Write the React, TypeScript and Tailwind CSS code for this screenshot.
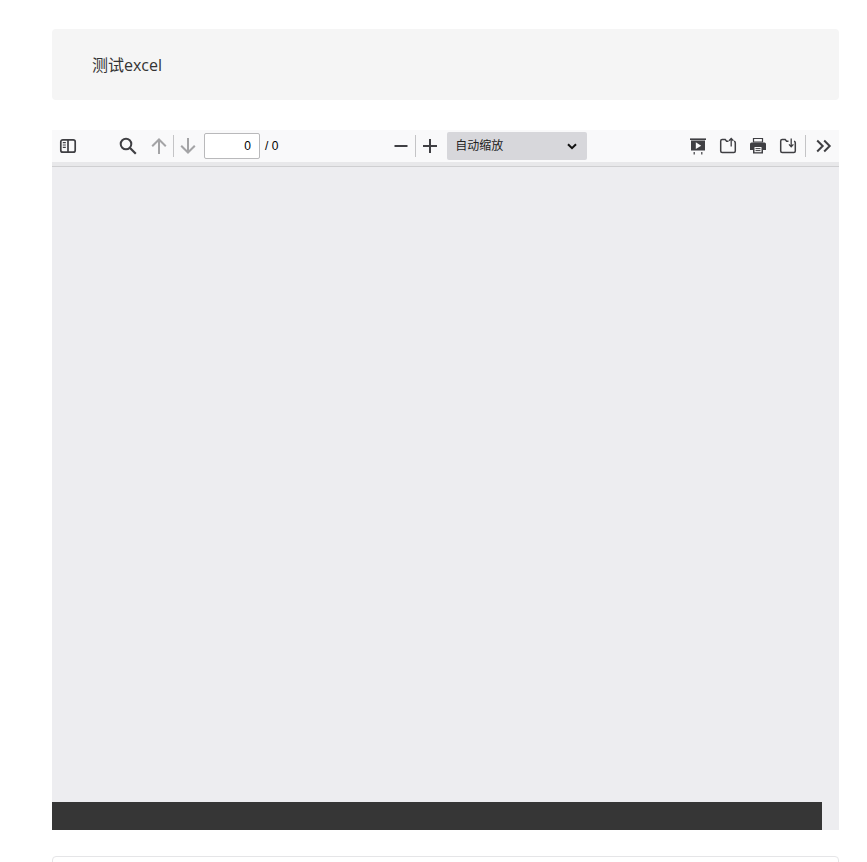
const sans = "font-['Liberation_Sans','Noto_Sans_CJK_SC',sans-serif]";

function Sep() {
  return <div className="w-px h-[22px] bg-[#c4c4c6]" />;
}

function Icon({ children, className }: { children: React.ReactNode; className?: string }) {
  return (
    <div className={`w-[18px] h-[18px] shrink-0 ${className ?? ""}`}>
      <svg width="18" height="18" viewBox="0 0 18 18" fill="none">
        {children}
      </svg>
    </div>
  );
}

const dark = "#3f3f43";
const grey = "#a4a4a6";

export default function App() {
  return (
    <div className={`min-h-[862px] h-[862px] overflow-hidden bg-white pl-[52px] pr-[28px] pt-[29px] ${sans}`}>
      <div className="h-[71px] rounded bg-[#f5f5f5] pl-[40px] flex items-center font-['Open_Sans','Noto_Sans_CJK_SC',sans-serif] text-[16px] text-[#333]">
        测试excel
      </div>

      <div className="mt-[30px] h-[700px] flex flex-col bg-[#ededf0]">
        {/* toolbar */}
        <div className="h-[32px] bg-[#f9f9fa] flex items-center pl-[7px] pr-[6px] text-[12px] text-black">
          <Icon>
            <rect x="1.8" y="2.8" width="14.4" height="12.4" rx="2" stroke={dark} strokeWidth="1.7" />
            <path d="M9 3v12" stroke={dark} strokeWidth="1.7" />
            <path d="M3.8 5.6h3M3.8 8h3M3.8 10.4h3" stroke={dark} strokeWidth="1.2" />
          </Icon>
          <Icon className="ml-[42px]">
            <circle cx="7" cy="7" r="5.3" stroke={dark} strokeWidth="2" />
            <path d="M11 11l5.8 5.8" stroke={dark} strokeWidth="2.2" />
          </Icon>
          <Icon className="ml-[13px]">
            <path d="M9 17V2.5M2.2 9.3L9 2.5 15.8 9.3" stroke={grey} strokeWidth="2" />
          </Icon>
          <div className="ml-[5px] mr-[5px]">
            <Sep />
          </div>
          <Icon>
            <path d="M9 1v14.5M2.2 8.7L9 15.5 15.8 8.7" stroke={grey} strokeWidth="2" />
          </Icon>
          <div className="ml-[7px] w-[56px] h-[26px] rounded-[2px] border border-[#b9b9bb] bg-white flex items-center justify-end pr-[8px]">
            0
          </div>
          <span className="ml-[5px]">/ 0</span>

          <Icon className="ml-[114px]">
            <path d="M2.5 9h13" stroke={dark} strokeWidth="2" />
          </Icon>
          <div className="ml-[5px] mr-[5px]">
            <Sep />
          </div>
          <Icon>
            <path d="M2 9h14M9 2v14" stroke={dark} strokeWidth="2" />
          </Icon>
          <div className="ml-[8px] w-[140px] h-[28px] rounded-[2px] bg-[#d7d7db] flex items-center justify-between pl-[8px] pr-[10px]">
            <span className="text-[#222]">自动缩放</span>
            <svg width="10" height="7" viewBox="0 0 10 7" fill="none">
              <path d="M1 1.2l4 4 4-4" stroke="#111" strokeWidth="2" />
            </svg>
          </div>

          {/* presentation */}
          <Icon className="ml-auto">
            <path d="M1 2.2h16" stroke={dark} strokeWidth="1.6" />
            <rect x="2" y="3.5" width="14" height="10" fill={dark} />
            <path d="M6.8 5.3l5.4 3.4-5.4 3.4z" fill="#f9f9fa" />
            <path d="M5.2 15v2.4M12.8 15v2.4" stroke={dark} strokeWidth="1.2" />
          </Icon>
          {/* open file */}
          <Icon className="ml-[12px]">
            <path d="M9.5 4.2H7.6L6.2 2.6H3.2A1.5 1.5 0 0 0 1.7 4.1v10a1.5 1.5 0 0 0 1.5 1.5h11.6a1.5 1.5 0 0 0 1.5-1.5V5.7a1.5 1.5 0 0 0-1.3-1.5" stroke={dark} strokeWidth="1.5" />
            <path d="M12.2 9.5V1.6M10 3.8l2.2-2.3 2.2 2.3" stroke={dark} strokeWidth="1.3" />
          </Icon>
          {/* print */}
          <Icon className="ml-[12px]">
            <path d="M4.5 5V1.5h9V5z" stroke={dark} strokeWidth="1.2" />
            <path d="M2.5 5.5h13A1.5 1.5 0 0 1 17 7v6h-3v3.5H4V13H1V7a1.5 1.5 0 0 1 1.5-1.5z" fill={dark} />
            <rect x="5.5" y="10" width="7" height="5.2" fill="#f9f9fa" />
            <path d="M6.5 11.6h5M6.5 13.6h5" stroke={dark} strokeWidth="1" />
          </Icon>
          {/* save */}
          <Icon className="ml-[12px]">
            <path d="M9.5 4.2H7.6L6.2 2.6H3.2A1.5 1.5 0 0 0 1.7 4.1v10a1.5 1.5 0 0 0 1.5 1.5h11.6a1.5 1.5 0 0 0 1.5-1.5V5.7a1.5 1.5 0 0 0-1.3-1.5" stroke={dark} strokeWidth="1.5" />
            <path d="M12.2 1.5v8.2M10 7.4l2.2 2.4 2.2-2.4" stroke={dark} strokeWidth="1.3" />
          </Icon>
          <div className="ml-[8px] mr-[9px]">
            <Sep />
          </div>
          <Icon>
            <path d="M2.2 3.5L7.7 9l-5.5 5.5M9.2 3.5L14.7 9l-5.5 5.5" stroke={dark} strokeWidth="2" />
          </Icon>
        </div>
        <div className="h-[5px] bg-[#e8e8ea] border-b border-[#cfcfd1]" />

        {/* viewer */}
        <div className="flex-1 flex flex-col justify-end pr-[17px]">
          <div className="h-[28px] bg-[#363636]" />
        </div>
      </div>

      <div className="mt-[26px] h-[60px] rounded border border-[#e5e5e7] bg-white" />
    </div>
  );
}
